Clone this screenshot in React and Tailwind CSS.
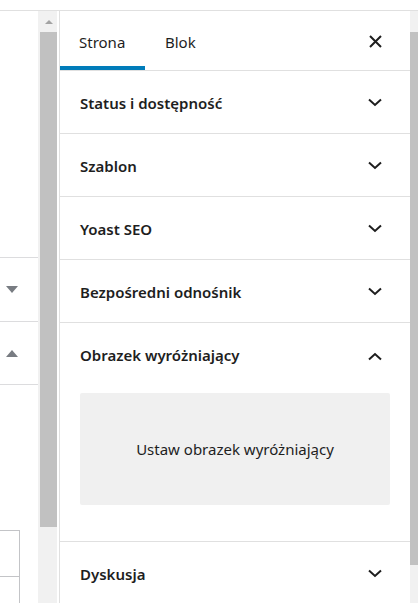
import React from "react";

function Chevron({ up = false }) {
  return (
    <svg width="16" height="10" viewBox="0 0 16 10" className="block">
      {up ? (
        <path d="M2 8.5 L8 3 L14 8.5" fill="none" stroke="#1e1e1e" strokeWidth="2" />
      ) : (
        <path d="M2 1.5 L8 7 L14 1.5" fill="none" stroke="#1e1e1e" strokeWidth="2" />
      )}
    </svg>
  );
}

function Row({ title, up = false }) {
  return (
    <div className="h-[63px] flex items-center justify-between pl-5 pr-[27px] pt-[2px] border-b border-[#e0e0e0] shrink-0">
      <span className="text-[15px] font-semibold text-[#1e1e1e]">{title}</span>
      <Chevron up={up} />
    </div>
  );
}

export default function App() {
  return (
    <div
      className="w-[418px] h-[603px] overflow-hidden bg-white flex flex-col"
      style={{ fontFamily: '"Noto Sans", "Open Sans", sans-serif' }}
    >
      <div className="h-[11px] shrink-0 border-b border-[#e0e0e0]" />
      <div className="flex flex-1 min-h-0">
        {/* left editor area */}
        <div className="w-[38px] shrink-0 flex flex-col">
          <div className="h-[246px] shrink-0" />
          <div className="h-[64px] shrink-0 border-t border-[#dcdcde] flex items-center pl-[6px]">
            <div className="w-0 h-0 border-l-[6px] border-r-[6px] border-t-[7px] border-l-transparent border-r-transparent border-t-[#787c82]" />
          </div>
          <div className="h-[64px] shrink-0 border-t border-b border-[#dcdcde] flex items-center pl-[6px]">
            <div className="w-0 h-0 border-l-[6px] border-r-[6px] border-b-[7px] border-l-transparent border-r-transparent border-b-[#787c82]" />
          </div>
          <div className="h-[145px] shrink-0" />
          <div className="w-[20px] h-[47px] shrink-0 border-t border-r border-b border-[#c3c4c7]" />
          <div className="w-[20px] flex-1 border-r border-[#c3c4c7]" />
        </div>
        {/* left scrollbar */}
        <div className="w-[19px] shrink-0 bg-[#f1f1f1] flex flex-col">
          <div className="h-[21px] shrink-0 flex items-center justify-center pl-[2px]">
            <div className="w-0 h-0 border-l-[4px] border-r-[4px] border-b-[4px] border-l-transparent border-r-transparent border-b-[#a3a3a3]" />
          </div>
          <div className="ml-[2px] h-[495px] bg-[#c1c1c1]" />
        </div>
        <div className="w-[2px] shrink-0" />
        {/* sidebar */}
        <div className="w-[351px] shrink-0 border-l border-[#e0e0e0] flex flex-col text-[#1e1e1e]">
          <div className="h-[60px] shrink-0 border-b border-[#e0e0e0] flex items-stretch">
            <div className="w-[85px] flex items-center pl-[19px] pt-[3px] relative">
              <span className="text-[15px]">Strona</span>
              <div className="absolute left-0 right-0 bottom-0 h-[4px] bg-[#007cba]" />
            </div>
            <div className="flex items-center pl-[20px] pt-[3px]">
              <span className="text-[15px]">Blok</span>
            </div>
            <div className="flex-1" />
            <div className="flex items-center pr-[28px] pt-[2px]">
              <svg width="13" height="13" viewBox="0 0 13 13">
                <path d="M1 1 L12 12 M12 1 L1 12" stroke="#1e1e1e" strokeWidth="2" />
              </svg>
            </div>
          </div>
          <Row title="Status i dostępność" />
          <Row title="Szablon" />
          <Row title="Yoast SEO" />
          <Row title="Bezpośredni odnośnik" />
          <div className="border-b border-[#e0e0e0] shrink-0">
            <div className="h-[63px] flex items-center justify-between pl-5 pr-[27px] pt-[2px]">
              <span className="text-[15px] font-semibold">Obrazek wyróżniający</span>
              <Chevron up />
            </div>
            <div className="px-5 pt-[7px] pb-[36px]">
              <div className="h-[112px] rounded-[2px] bg-[#f0f0f0] flex items-center justify-center">
                <span className="text-[15px]">Ustaw obrazek wyróżniający</span>
              </div>
            </div>
          </div>
          <Row title="Dyskusja" />
        </div>
        {/* right scrollbar */}
        <div className="flex-1 bg-[#f1f1f1] flex flex-col">
          <div className="h-[21px] shrink-0" />
          <div className="h-[533px] bg-[#c1c1c1]" />
        </div>
      </div>
    </div>
  );
}
